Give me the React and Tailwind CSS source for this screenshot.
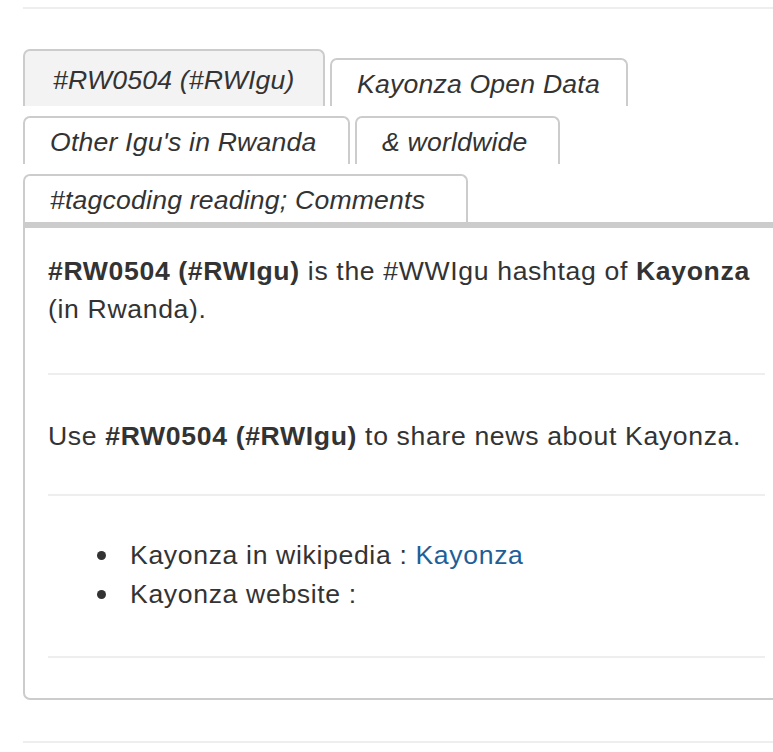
const tabs = [
  { label: "#RW0504 (#RWIgu)", width: "w-[302px]", active: true },
  { label: "Kayonza Open Data", width: "w-[298px]" },
  { label: "Other Igu's in Rwanda", width: "w-[327px]" },
  { label: "& worldwide", width: "w-[205px]" },
  { label: "#tagcoding reading; Comments", width: "w-[445px]" },
];

function Tab({ tab }) {
  return (
    <li
      className={
        "shrink-0 rounded-t-[7px] border-2 border-b-0 border-[#cccccc] pl-[25px] text-[26.6px] italic leading-[38px] tracking-[0.2px] text-[#333333] " +
        tab.width +
        (tab.active ? " bg-[#f3f3f3] pt-[10px] pb-[7px] pl-[28px]" : " bg-white pt-[5px] pb-[3px]")
      }
    >
      {tab.label}
    </li>
  );
}

function Bullet({ children }) {
  return (
    <li className="flex items-center">
      <span className="ml-[49px] mr-[24px] h-[9px] w-[9px] rounded-full bg-[#333333]" />
      <span>{children}</span>
    </li>
  );
}

export default function App() {
  return (
    <div
      className="h-[752px] w-[773px] overflow-hidden bg-white text-[#333333]"
      style={{ fontFamily: '"Liberation Sans", Arial, sans-serif' }}
    >
      <div className="ml-[23px] mt-[7px] h-[2px] bg-[#eeeeee]" />

      <div className="ml-[23px] mt-[40px] w-[767px]">
        {/* onglets */}
        <ul className="flex flex-wrap items-end gap-x-[5px] gap-y-[10px]">
          {tabs.map((tab) => (
            <Tab key={tab.label} tab={tab} />
          ))}
        </ul>

        {/* contenu */}
        <div className="rounded-b-[7px] border-2 border-t-[6px] border-[#cccccc] px-[23px] pt-[24px] pb-[40px] text-[26.6px] leading-[38px] tracking-[0.65px]">
          <p>
            <b>#RW0504 (#RWIgu)</b> is the #WWIgu hashtag of <b>Kayonza</b> (in Rwanda).
          </p>
          <hr className="mt-[45px] border-t-2 border-[#eeeeee]" />
          <p className="mt-[42px]">
            Use <b>#RW0504 (#RWIgu)</b> to share news about Kayonza.
          </p>
          <hr className="mt-[39px] border-t-2 border-[#eeeeee]" />
          <ul className="mt-[40px] leading-[39px]">
            <Bullet>
              Kayonza in wikipedia : <a href="#" className="text-[#1e5f99]">Kayonza</a>
            </Bullet>
            <Bullet>Kayonza website :</Bullet>
          </ul>
          <hr className="mt-[42px] border-t-2 border-[#eeeeee]" />
        </div>
      </div>

      <div className="ml-[23px] mt-[41px] h-[2px] bg-[#eeeeee]" />
    </div>
  );
}
